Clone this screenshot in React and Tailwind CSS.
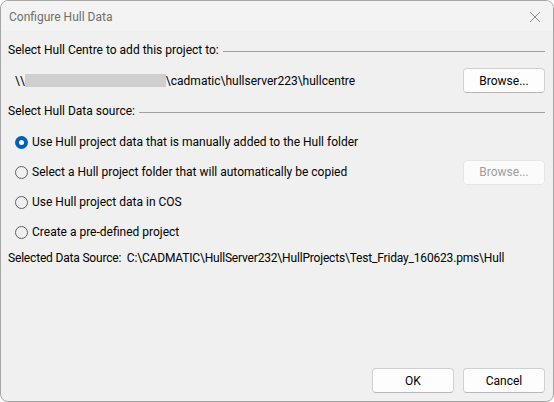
import React, { useState } from 'react';

const font = { fontFamily: 'Roboto, "Noto Sans", sans-serif' };

function Radio({ checked, label, onSelect }) {
  return (
    <label className="flex items-center h-[16px] cursor-default" onClick={onSelect}>
      <span
        className={
          checked
            ? 'w-[13px] h-[13px] rounded-full bg-[#005fb8] flex items-center justify-center ml-[7px]'
            : 'w-[13px] h-[13px] rounded-full border border-[#5f5f5f] bg-[#f0f0f0] ml-[7px]'
        }
      >
        {checked && <span className="w-[5px] h-[5px] rounded-full bg-white" />}
      </span>
      <span className="ml-[4px] text-[12px] leading-[16px] text-black">{label}</span>
    </label>
  );
}

function Button({ children, disabled, className = '' }) {
  return (
    <button
      className={
        'w-[82px] h-[25px] rounded-[4px] text-[12px] ' +
        (disabled
          ? 'bg-[#fbfbfb] border border-[#e5e5e5] text-[#9d9d9d] '
          : 'bg-[#fdfdfd] border border-[#d0d0d0] border-b-[#b8b8b8] text-black ') +
        className
      }
    >
      {children}
    </button>
  );
}

export default function App() {
  const [source, setSource] = useState(0);
  const options = [
    'Use Hull project data that is manually added to the Hull folder',
    'Select a Hull project folder that will automatically be copied',
    'Use Hull project data in COS',
    'Create a pre-defined project',
  ];

  return (
    <div className="w-[554px] h-[402px] bg-white" style={font}>
      <div className="w-full h-full rounded-[8px] border border-[#a6a6a6] bg-[#f0f0f0] overflow-hidden flex flex-col">
        {/* Title bar */}
        <div className="h-[30px] bg-[#f3f3f3] flex items-center justify-between pl-[8px] pr-[12px] pt-[1px] shrink-0">
          <span className="text-[12px] leading-[16px] text-[#6f6f6f]">Configure Hull Data</span>
          <svg width="12" height="12" viewBox="0 0 12 12">
            <path d="M1 1 L11 11 M11 1 L1 11" stroke="#8a8a8a" strokeWidth="1" fill="none" />
          </svg>
        </div>

        {/* Body */}
        <div className="flex-1 flex flex-col px-[7px] pt-[11px] pb-[8px] text-[12px] leading-[16px] text-black">
          <div className="flex items-center h-[16px]">
            <span className="whitespace-nowrap">Select Hull Centre to add this project to:</span>
            <div className="flex-1 ml-[4px] mr-[1px] h-px bg-[#a0a0a0] mt-[3px]" />
          </div>

          <div className="flex items-center justify-between mt-[10px] h-[25px]">
            <div className="flex items-center pl-[7px]">
              <span>\\</span>
              <span className="w-[141px] h-[13px] bg-[#cfcfcf]" />
              <span>\cadmatic\hullserver223\hullcentre</span>
            </div>
            <Button className="mr-[1px]">Browse...</Button>
          </div>

          <div className="flex items-center h-[16px] mt-[10px]">
            <span className="whitespace-nowrap">Select Hull Data source:</span>
            <div className="flex-1 ml-[4px] mr-[1px] h-px bg-[#a0a0a0] mt-[3px]" />
          </div>

          <div className="flex flex-col mt-[8px]">
            <div className="h-[30px] flex items-center">
              <Radio checked={source === 0} label={options[0]} onSelect={() => setSource(0)} />
            </div>
            <div className="h-[30px] flex items-center justify-between">
              <Radio checked={source === 1} label={options[1]} onSelect={() => setSource(1)} />
              <Button disabled className="mr-[1px]">Browse...</Button>
            </div>
            <div className="h-[30px] flex items-center">
              <Radio checked={source === 2} label={options[2]} onSelect={() => setSource(2)} />
            </div>
            <div className="h-[30px] flex items-center">
              <Radio checked={source === 3} label={options[3]} onSelect={() => setSource(3)} />
            </div>
          </div>

          <div className="mt-[3px] h-[16px] whitespace-nowrap tracking-[-0.18px]">
            Selected Data Source:&nbsp; C:\CADMATIC\HullServer232\HullProjects\Test_Friday_160623.pms\Hull
          </div>

          <div className="flex-1" />

          <div className="flex justify-end gap-[9px] mr-[1px]">
            <Button>OK</Button>
            <Button>Cancel</Button>
          </div>
        </div>
      </div>
    </div>
  );
}
